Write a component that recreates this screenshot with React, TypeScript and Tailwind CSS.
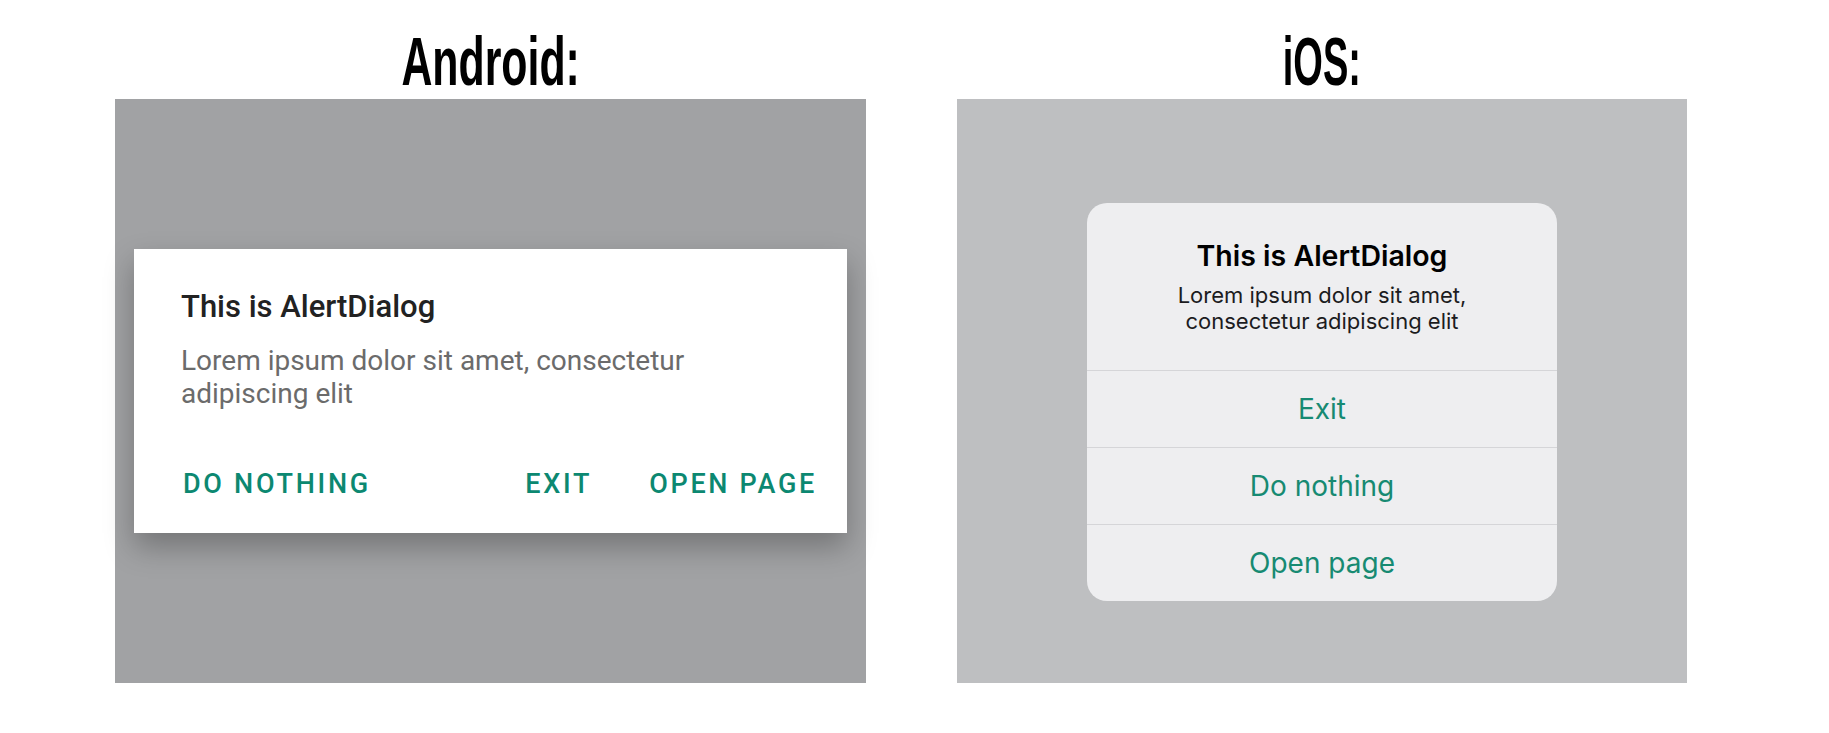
const androidActions = ['DO NOTHING', 'EXIT', 'OPEN PAGE'];
const iosActions = ['Exit', 'Do nothing', 'Open page'];

const Heading = ({ children, squeeze }: { children: string; squeeze: string }) => (
    <div className="h-[99px] pt-[26px] flex justify-center">
        <h1 className={`text-[68px] leading-[70px] font-bold text-black ${squeeze} font-['Liberation_Sans_Narrow','Liberation_Sans',sans-serif]`}>
            {children}
        </h1>
    </div>
);

export default function App() {
    return (
        <div className="w-[1829px] h-[733px] bg-white flex pl-[115px] gap-[91px]">
            {/* ── Android ─────────────────────────────────────────── */}
            <section className="w-[751px] flex flex-col">
                <Heading squeeze="scale-x-[0.63]">Android:</Heading>
                <div className="h-[584px] bg-[#a1a2a4] pt-[150px] px-[19px]">
                    <div className="h-[284px] bg-white shadow-[0_14px_28px_rgba(0,0,0,0.28)] pt-[39px] pl-[47px] pr-[30px] flex flex-col font-['Roboto',sans-serif]">
                        <h2 className="text-[31px] leading-[38px] font-medium text-[#222222]">This is AlertDialog</h2>
                        <p className="mt-[18px] text-[28px] leading-[33px] text-[#6b6b6b] w-[560px]">
                            Lorem ipsum dolor sit amet, consectetur adipiscing elit
                        </p>
                        <div className="mt-[58px] flex items-center text-[27px] leading-[32px] font-medium tracking-[0.1em] text-[#0c8871]">
                            <span className="pl-[2px]">{androidActions[0]}</span>
                            <span className="ml-auto">{androidActions[1]}</span>
                            <span className="ml-[57px]">{androidActions[2]}</span>
                        </div>
                    </div>
                </div>
            </section>

            {/* ── iOS ─────────────────────────────────────────────── */}
            <section className="w-[730px] flex flex-col">
                <Heading squeeze="scale-x-[0.56]">iOS:</Heading>
                <div className="h-[584px] bg-[#bebfc1] pt-[104px] px-[130px]">
                    <div className="bg-[#eeeef0] rounded-[20px] overflow-hidden font-['Inter',sans-serif] text-center">
                        <div className="h-[167px] pt-[35px]">
                            <h2 className="text-[28.5px] leading-[36px] font-semibold text-black">This is AlertDialog</h2>
                            <p className="mt-[8px] text-[22px] leading-[26px] text-[#1c1c1e]">
                                Lorem ipsum dolor sit amet,
                                <br />
                                consectetur adipiscing elit
                            </p>
                        </div>
                        {iosActions.map(label => (
                            <div key={label} className="h-[77px] border-t border-[#d5d5d8] flex items-center justify-center text-[28px] text-[#178a72]">
                                {label}
                            </div>
                        ))}
                    </div>
                </div>
            </section>
        </div>
    );
}
